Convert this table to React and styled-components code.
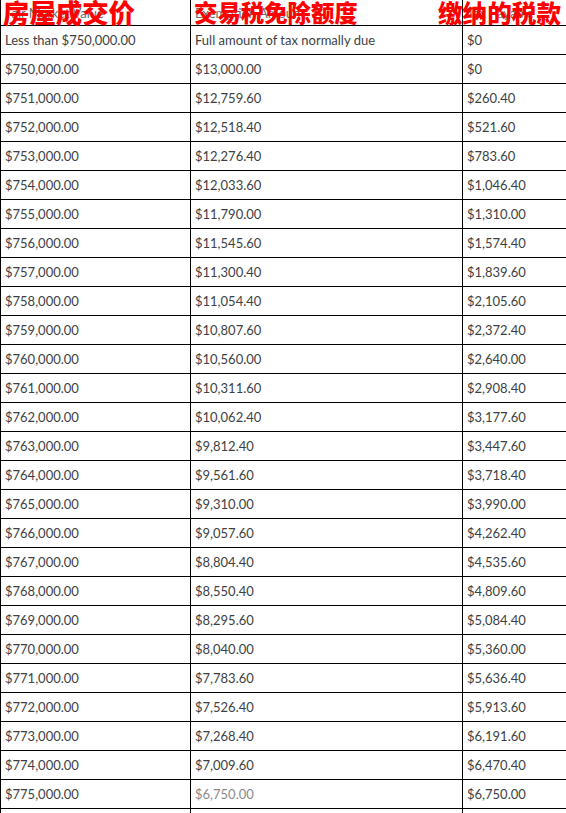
import React from "react";
import styled, { createGlobalStyle } from "styled-components";

const rows = [
  ["Less than $750,000.00", "Full amount of tax normally due", "$0"],
  ["$750,000.00", "$13,000.00", "$0"],
  ["$751,000.00", "$12,759.60", "$260.40"],
  ["$752,000.00", "$12,518.40", "$521.60"],
  ["$753,000.00", "$12,276.40", "$783.60"],
  ["$754,000.00", "$12,033.60", "$1,046.40"],
  ["$755,000.00", "$11,790.00", "$1,310.00"],
  ["$756,000.00", "$11,545.60", "$1,574.40"],
  ["$757,000.00", "$11,300.40", "$1,839.60"],
  ["$758,000.00", "$11,054.40", "$2,105.60"],
  ["$759,000.00", "$10,807.60", "$2,372.40"],
  ["$760,000.00", "$10,560.00", "$2,640.00"],
  ["$761,000.00", "$10,311.60", "$2,908.40"],
  ["$762,000.00", "$10,062.40", "$3,177.60"],
  ["$763,000.00", "$9,812.40", "$3,447.60"],
  ["$764,000.00", "$9,561.60", "$3,718.40"],
  ["$765,000.00", "$9,310.00", "$3,990.00"],
  ["$766,000.00", "$9,057.60", "$4,262.40"],
  ["$767,000.00", "$8,804.40", "$4,535.60"],
  ["$768,000.00", "$8,550.40", "$4,809.60"],
  ["$769,000.00", "$8,295.60", "$5,084.40"],
  ["$770,000.00", "$8,040.00", "$5,360.00"],
  ["$771,000.00", "$7,783.60", "$5,636.40"],
  ["$772,000.00", "$7,526.40", "$5,913.60"],
  ["$773,000.00", "$7,268.40", "$6,191.60"],
  ["$774,000.00", "$7,009.60", "$6,470.40"],
  ["$775,000.00", "$6,750.00", "$6,750.00"],
  ["$776,000.00", "$6,489.60", "$7,029.60"],
];

const headers = [
  { en: "Fair Market Value", zh: "房屋成交价", size: 26.4, left: 2 },
  { en: "Exemption Amount", zh: "交易税免除额度", size: 23.4, left: 3 },
  { en: "Tax Payable", zh: "缴纳的税款", size: 24.6, left: -25 },
];

const GlobalStyle = createGlobalStyle`
  html, body {
    margin: 0;
    padding: 0;
    background: #fff;
    overflow: hidden;
  }
`;

const Wrapper = styled.div`
  width: 566px;
  height: 813px;
  overflow: hidden;
`;

const Table = styled.table`
  border-collapse: collapse;
  width: 640px;
  table-layout: fixed;
  font-family: Lato, "Liberation Sans", sans-serif;
  font-size: 13px;
  color: #3d3f44;
`;

const HeadCell = styled.th`
  position: relative;
  height: 25px;
  padding: 0 4px;
  text-align: left;
  font-weight: 400;
  color: #6a6a6a;
  border-left: 1px solid #000;
  border-bottom: 1px solid #000;
  vertical-align: middle;
  white-space: nowrap;
`;

const Overlay = styled.span`
  position: absolute;
  top: -2px;
  left: ${(p) => p.$left}px;
  font-family: "Noto Sans CJK SC", sans-serif;
  font-weight: 900;
  font-size: ${(p) => p.$size}px;
  line-height: 28px;
  color: #ff0000;
  white-space: nowrap;
`;

const Cell = styled.td`
  height: 28px;
  padding: 0 4px;
  border: 1px solid #000;
  border-top: none;
  vertical-align: middle;
  white-space: nowrap;
  color: ${(p) => (p.$faded ? "#8a8a8a" : "inherit")};
`;

const App = () => (
  <Wrapper>
    <GlobalStyle />
    <Table>
      <colgroup>
        <col style={{ width: 190 }} />
        <col style={{ width: 272 }} />
        <col />
      </colgroup>
      <thead>
        <tr>
          {headers.map((h) => (
            <HeadCell key={h.en}>
              {h.en}
              <Overlay $size={h.size} $left={h.left}>
                {h.zh}
              </Overlay>
            </HeadCell>
          ))}
        </tr>
      </thead>
      <tbody>
        {rows.map((r, i) => (
          <tr key={r[0]}>
            <Cell>{r[0]}</Cell>
            <Cell $faded={i === 26}>{r[1]}</Cell>
            <Cell>{r[2]}</Cell>
          </tr>
        ))}
      </tbody>
    </Table>
  </Wrapper>
);

export default App;
